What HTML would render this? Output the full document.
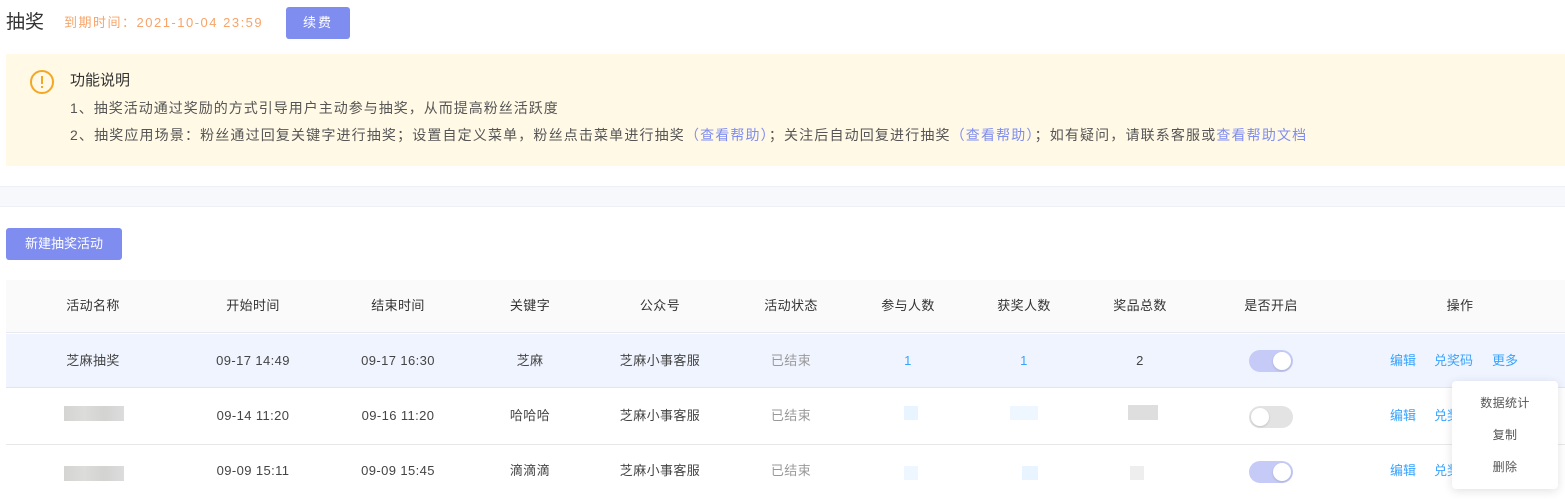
<!DOCTYPE html>
<html><head><meta charset="utf-8"><style>
*{margin:0;padding:0;box-sizing:border-box}
body{width:1565px;height:499px;overflow:hidden;background:#fff;font-family:"Liberation Sans","Noto Sans CJK SC",sans-serif;color:#333;position:relative;font-size:13px;line-height:18px}
.a{position:absolute;white-space:nowrap}
.c{position:absolute;transform:translateX(-50%);white-space:nowrap;font-size:13px;color:#444;line-height:18px;letter-spacing:0.4px}
.link{color:#37a3ff}
.tog{position:absolute;width:44px;height:22px;border-radius:11px}
.tog i{position:absolute;top:2px;width:18px;height:18px;border-radius:50%;background:#fff;box-shadow:0 1px 2px rgba(0,0,0,.15)}
.blur{position:absolute;width:60px;height:15px;background:linear-gradient(90deg,#d4d4d2,#dcdcda,#d3d3d1,#dbdcdc)}
</style></head><body>
<div class="a" style="left:6px;top:10px;font-size:19px;line-height:26px;color:#333">抽奖</div>
<div class="a" style="left:64px;top:14px;font-size:13px;color:#f7a46a;letter-spacing:1.5px">到期时间：2021-10-04 23:59</div>
<div class="a" style="left:286px;top:7px;width:64px;height:32px;background:#7f8df0;border-radius:3px;color:#fff;text-align:center;line-height:32px;font-size:13px;letter-spacing:2px">续费</div>
<div class="a" style="left:6px;top:54px;width:1559px;height:112px;background:#fff9e6"></div>
<svg class="a" style="left:29px;top:69px" width="26" height="26" viewBox="0 0 26 26"><circle cx="13" cy="13" r="11" fill="none" stroke="#f5a623" stroke-width="2"/><rect x="12" y="7" width="2" height="8" fill="#f5a623"/><rect x="12" y="17" width="2" height="2" fill="#f5a623"/></svg>
<div class="a" style="left:70px;top:71px;font-size:15px;line-height:20px;color:#333">功能说明</div>
<div class="a" style="left:70px;top:99px;font-size:14px;letter-spacing:1px;color:#555">1、抽奖活动通过奖励的方式引导用户主动参与抽奖，从而提高粉丝活跃度</div>
<div class="a" style="left:70px;top:126px;font-size:14px;letter-spacing:1.15px;color:#555">2、抽奖应用场景：粉丝通过回复关键字进行抽奖；设置自定义菜单，粉丝点击菜单进行抽奖<span style="color:#7f8df0">（查看帮助）</span>；关注后自动回复进行抽奖<span style="color:#7f8df0">（查看帮助）</span>；如有疑问，请联系客服或<span style="color:#7f8df0">查看帮助文档</span></div>
<div class="a" style="left:0;top:186px;width:1565px;height:21px;background:#f7f8fc;border-top:1px solid #eef0f5;border-bottom:1px solid #eef0f5"></div>
<div class="a" style="left:6px;top:228px;width:116px;height:32px;background:#7f8df0;border-radius:3px;color:#fff;text-align:center;line-height:32px;font-size:13px">新建抽奖活动</div>
<div class="a" style="left:6px;top:280px;width:1559px;height:53px;background:#fafafa;border-bottom:1px solid #e8e8ee"></div>
<div class="a" style="left:6px;top:334px;width:1559px;height:54px;background:#f0f4ff;border-bottom:1px solid #e6e6ea"></div>
<div class="a" style="left:6px;top:444px;width:1559px;height:1px;background:#e8e8e8"></div>
<div class="c" style="left:93px;top:297px;color:#333">活动名称</div>
<div class="c" style="left:253px;top:297px;color:#333">开始时间</div>
<div class="c" style="left:398px;top:297px;color:#333">结束时间</div>
<div class="c" style="left:530px;top:297px;color:#333">关键字</div>
<div class="c" style="left:660px;top:297px;color:#333">公众号</div>
<div class="c" style="left:791px;top:297px;color:#333">活动状态</div>
<div class="c" style="left:908px;top:297px;color:#333">参与人数</div>
<div class="c" style="left:1024px;top:297px;color:#333">获奖人数</div>
<div class="c" style="left:1140px;top:297px;color:#333">奖品总数</div>
<div class="c" style="left:1271px;top:297px;color:#333">是否开启</div>
<div class="c" style="left:1460px;top:297px;color:#333">操作</div>

<div class="c" style="left:93px;top:352px">芝麻抽奖</div>
<div class="c" style="left:253px;top:352px">09-17 14:49</div>
<div class="c" style="left:398px;top:352px">09-17 16:30</div>
<div class="c" style="left:530px;top:352px">芝麻</div>
<div class="c" style="left:660px;top:352px">芝麻小事客服</div>
<div class="c" style="left:791px;top:352px;color:#999">已结束</div>
<div class="c link" style="left:908px;top:352px">1</div>
<div class="c link" style="left:1024px;top:352px">1</div>
<div class="c" style="left:1140px;top:352px">2</div>
<div class="tog" style="left:1249px;top:350px;background:#c5cbf6"><i style="right:2px"></i></div>
<div class="a link" style="left:1390px;top:352px">编辑</div>
<div class="a link" style="left:1434px;top:352px">兑奖码</div>
<div class="a link" style="left:1492px;top:352px">更多</div>

<div class="blur" style="left:64px;top:406px"></div>
<div class="c" style="left:253px;top:407px">09-14 11:20</div>
<div class="c" style="left:398px;top:407px">09-16 11:20</div>
<div class="c" style="left:530px;top:407px">哈哈哈</div>
<div class="c" style="left:660px;top:407px">芝麻小事客服</div>
<div class="c" style="left:791px;top:407px;color:#999">已结束</div>
<div class="a" style="left:904px;top:406px;width:14px;height:14px;background:#e8f4ff"></div>
<div class="a" style="left:1010px;top:406px;width:28px;height:14px;background:#eef7ff"></div>
<div class="a" style="left:1128px;top:405px;width:30px;height:15px;background:#dedede"></div>
<div class="tog" style="left:1249px;top:406px;background:#e3e3e3"><i style="left:2px"></i></div>
<div class="a link" style="left:1390px;top:407px">编辑</div>
<div class="a link" style="left:1434px;top:407px">兑奖</div>

<div class="blur" style="left:64px;top:466px"></div>
<div class="c" style="left:253px;top:462px">09-09 15:11</div>
<div class="c" style="left:398px;top:462px">09-09 15:45</div>
<div class="c" style="left:530px;top:462px">滴滴滴</div>
<div class="c" style="left:660px;top:462px">芝麻小事客服</div>
<div class="c" style="left:791px;top:462px;color:#999">已结束</div>
<div class="a" style="left:904px;top:466px;width:14px;height:14px;background:#eef6ff"></div>
<div class="a" style="left:1022px;top:466px;width:16px;height:14px;background:#e8f4ff"></div>
<div class="a" style="left:1130px;top:466px;width:14px;height:14px;background:#eeeeee"></div>
<div class="tog" style="left:1249px;top:461px;background:#c5cbf6"><i style="right:2px"></i></div>
<div class="a link" style="left:1390px;top:462px">编辑</div>
<div class="a link" style="left:1434px;top:462px">兑奖</div>

<div class="a" style="left:1452px;top:381px;width:106px;height:108px;background:#fff;border-radius:4px;box-shadow:0 2px 10px rgba(0,0,0,.12)"></div>
<div class="c" style="left:1505px;top:394px;font-size:12px;color:#555">数据统计</div>
<div class="c" style="left:1505px;top:426px;font-size:12px;color:#555">复制</div>
<div class="c" style="left:1505px;top:458px;font-size:12px;color:#555">删除</div>
</body></html>
